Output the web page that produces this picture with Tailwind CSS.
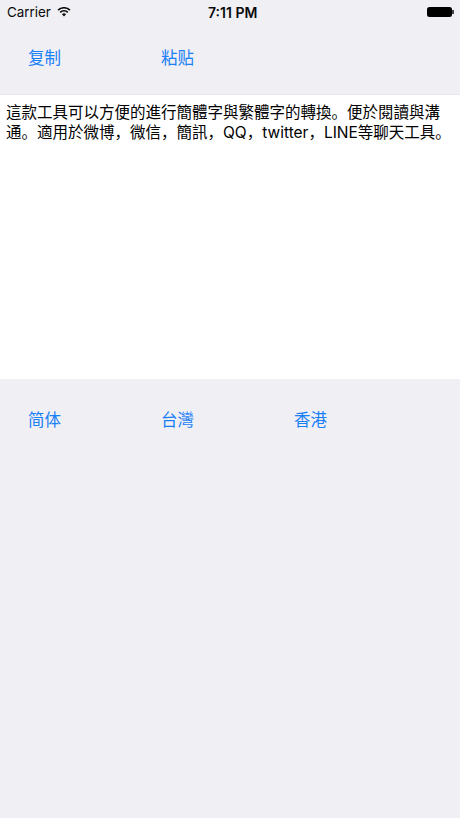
<!DOCTYPE html>
<html lang="zh-Hans">
<head>
<meta charset="utf-8">
<script src="https://cdn.jsdelivr.net/npm/@tailwindcss/browser@4"></script>
</head>
<body class="bg-[#efeff4]">
<div class="w-[460px] h-[818px] overflow-hidden bg-[#efeff4] flex flex-col font-['Inter','Noto_Sans_CJK_SC',sans-serif]">
  <div class="h-6 flex items-center justify-between pl-[7px] pr-[6px] text-[13.4px] text-[#0a0a0a] relative">
    <div class="flex items-center gap-[6px]">
      <span>Carrier</span>
      <svg width="14" height="10" viewBox="0 0 15 11"><path d="M7.5 10.5 5.3 8a3.2 3.2 0 0 1 4.4 0zM3.9 6.5 2.7 5.1a7.2 7.2 0 0 1 9.6 0l-1.2 1.4a5.4 5.4 0 0 0-7.2 0zM1.6 4 .4 2.7a10.6 10.6 0 0 1 14.2 0L13.4 4a8.8 8.8 0 0 0-11.8 0z" fill="#0a0a0a"/></svg>
    </div>
    <span class="absolute left-[208px] text-[14px] font-semibold">7:11 PM</span>
    <div class="flex items-center">
      <div class="w-[25px] h-[10px] rounded-[2.5px] bg-black"></div>
      <div class="w-[2px] h-[4px] bg-black/70"></div>
    </div>
  </div>
  <div class="h-[70px] flex items-start pt-[23px]">
    <button class="w-[133px] pl-[28px] text-left text-[16.5px] leading-[22px] text-[#1a80f5]">复制</button>
    <button class="w-[133px] pl-[28px] text-left text-[16.5px] leading-[22px] text-[#1a80f5]">粘贴</button>
  </div>
  <div class="h-[285px] bg-white border-t border-[#e8e8ec] px-[6px] pt-[8px] text-[15.5px] leading-[20px] text-black">這款工具可以方便的進行簡體字與繁體字的轉換。便於閱讀與溝通。適用於微博，微信，簡訊，QQ，twitter，LINE等聊天工具。</div>
  <div class="flex items-start pt-[30px]">
    <button class="w-[133px] pl-[28px] text-left text-[16.5px] leading-[22px] text-[#1a80f5]">简体</button>
    <button class="w-[133px] pl-[28px] text-left text-[16.5px] leading-[22px] text-[#1a80f5]">台灣</button>
    <button class="w-[133px] pl-[28px] text-left text-[16.5px] leading-[22px] text-[#1a80f5]">香港</button>
  </div>
</div>
</body>
</html>
